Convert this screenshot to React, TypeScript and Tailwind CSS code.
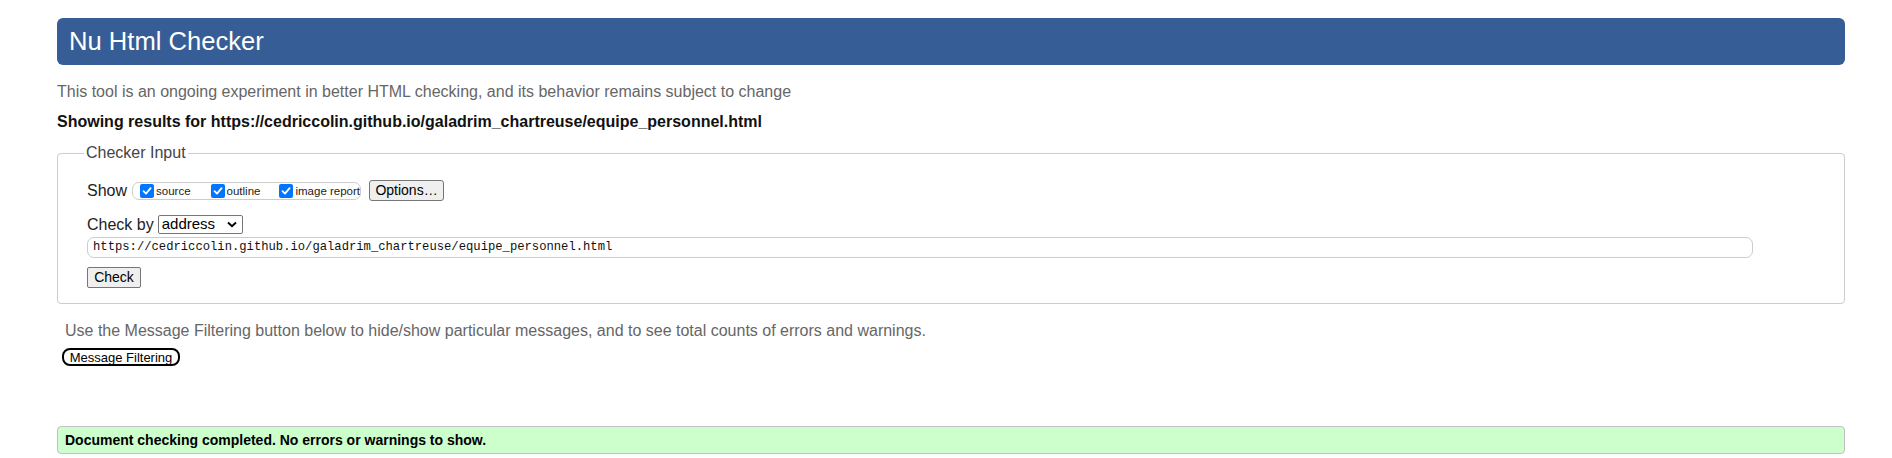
import React from "react";

function Cb({ label }: { label: string }) {
  return (
    <label className="flex items-center">
      <span className="w-[14px] h-[14px] rounded-[2px] bg-[#0075ff] flex items-center justify-center">
        <svg width="10" height="10" viewBox="0 0 10 10">
          <path d="M1.5 5.2 L4 7.6 L8.6 2.2" stroke="white" strokeWidth="1.8" fill="none" strokeLinecap="round" strokeLinejoin="round" />
        </svg>
      </span>
      <span className="ml-[2px] text-[11.5px] text-[#222] leading-none pt-[3px]">{label}</span>
    </label>
  );
}

export default function App() {
  return (
    <div className="bg-white min-h-[458px] pl-[57px] pr-[47px] pt-[18px] font-['Liberation_Sans',Arial,sans-serif]">
      <div className="h-[47px] rounded-[6px] bg-[#365d95] text-white text-[25.6px] flex items-center pl-[12px] pb-[1px]">
        Nu Html Checker
      </div>
      <p className="mt-[17px] h-[20px] leading-[20px] text-[16px] text-[#666]">
        This tool is an ongoing experiment in better HTML checking, and its behavior remains subject to change
      </p>
      <p className="mt-[10px] h-[20px] leading-[20px] text-[16px] font-bold text-[#111]">
        Showing results for https://cedriccolin.github.io/galadrim_chartreuse/equipe_personnel.html
      </p>
      <div className="relative mt-[21px] h-[151px] border border-[#cccccc] rounded-[4px] pl-[29px] pr-[91px] pt-[26px]">
        <div className="absolute left-[26px] top-[-11px] bg-white px-[2px] text-[16px] leading-[20px] text-[#444]">
          Checker Input
        </div>
        <div className="flex items-center h-[21px] text-[16px] text-[#222]">
          <span>Show</span>
          <div className="ml-[5px] w-[229px] h-[18px] border border-[#cccccc] rounded-[7px] flex items-center pl-[7px]">
            <Cb label="source" />
            <span className="w-[20px]" />
            <Cb label="outline" />
            <span className="w-[19px]" />
            <Cb label="image report" />
          </div>
          <button className="ml-[8px] w-[75px] h-[21px] bg-[#efefef] border border-[#767676] rounded-[3px] text-[14px] text-black flex items-center justify-center">
            Options…
          </button>
        </div>
        <div className="flex items-center mt-[14px] h-[19px] text-[16px] text-[#222]">
          <span>Check by</span>
          <div className="ml-[4px] w-[85px] h-[19px] border border-[#767676] rounded-[2px] flex items-center justify-between pl-[3px] pr-[5px] text-[15px] text-black">
            <span>address</span>
            <svg width="10" height="7" viewBox="0 0 10 7">
              <path d="M1 1.5 L5 5.3 L9 1.5" stroke="black" strokeWidth="1.9" fill="none" />
            </svg>
          </div>
        </div>
        <div className="mt-[3px] h-[21px] border border-[#cccccc] rounded-[7px] flex items-center pl-[5px] font-['Liberation_Mono',monospace] text-[12.2px] text-[#111]">
          https://cedriccolin.github.io/galadrim_chartreuse/equipe_personnel.html
        </div>
        <button className="mt-[9px] w-[54px] h-[21px] bg-[#efefef] border border-[#767676] rounded-[2px] text-[14px] text-black flex items-center justify-center">
          Check
        </button>
      </div>
      <p className="mt-[17px] ml-[8px] h-[20px] leading-[20px] text-[16px] text-[#666]">
        Use the Message Filtering button below to hide/show particular messages, and to see total counts of errors and warnings.
      </p>
      <button className="mt-[7px] ml-[5px] w-[118px] h-[18px] border-2 border-black rounded-[8px] text-[13px] text-black flex items-center justify-center leading-none">
        Message Filtering
      </button>
      <div className="mt-[60px] h-[28px] bg-[#ccffcc] border border-[#c2c2c2] rounded-[4px] flex items-center pl-[7px] text-[14px] font-bold text-black">
        Document checking completed. No errors or warnings to show.
      </div>
    </div>
  );
}
